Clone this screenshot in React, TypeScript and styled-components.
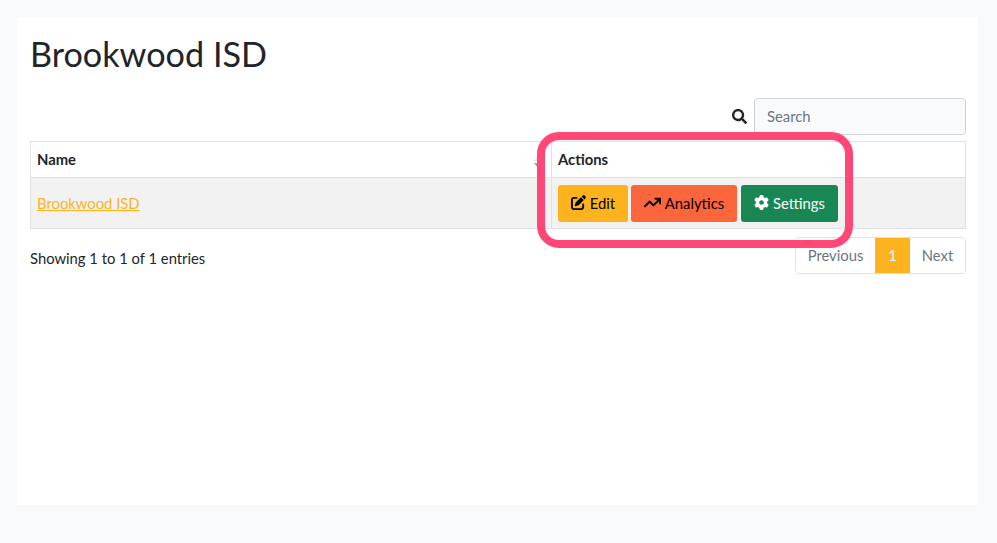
import React from "react";
import styled, { createGlobalStyle } from "styled-components";
import { FaSearch } from "react-icons/fa";
import { FaArrowTrendUp, FaGear, FaPenToSquare } from "react-icons/fa6";

const Global = createGlobalStyle`
  html, body { margin: 0; padding: 0; background: #f8f9fb; }
  body { font-family: Lato, "Open Sans", "Liberation Sans", sans-serif; color: #212529; font-size: 14.8px; }
  * { box-sizing: border-box; }
`;

const Page = styled.div`
  width: 997px;
  height: 543px;
  padding: 17px 19px 38px 17px;
`;

const Card = styled.main`
  position: relative;
  height: 488px;
  background: #fff;
  padding: 17px 12px 0 13px;
`;

const Title = styled.h1`
  margin: 0;
  height: 64px;
  padding-top: 0;
  font-size: 34.2px;
  line-height: 39px;
  font-weight: 400;
`;

const SearchBar = styled.div`
  display: flex;
  justify-content: flex-end;
  align-items: center;
  gap: 7px;
  height: 37px;
  margin-bottom: 6px;
`;

const SearchInput = styled.input`
  width: 212px;
  height: 37px;
  padding: 0 12px 2px;
  border: 1px solid #ced4da;
  border-radius: 4px;
  background: #f8fafc;
  font: inherit;
  &::placeholder { color: #6c757d; opacity: 1; }
`;

const Table = styled.table`
  width: 936px;
  border-collapse: collapse;
  table-layout: fixed;
`;

const NameCol = styled.col`
  width: 521px;
`;

const HeadCell = styled.th`
  position: relative;
  height: 36px;
  padding: 0 6px 2px;
  border: 1px solid #dee2e6;
  text-align: left;
  font-weight: 700;
  font-size: 14.8px;
`;

const SortMark = styled.span`
  position: absolute;
  right: 9px;
  bottom: 9px;
  width: 0;
  height: 0;
  border-left: 4px solid transparent;
  border-right: 4px solid transparent;
  border-top: 5px solid #9a9da0;
  &::before {
    content: "";
    position: absolute;
    left: -4px;
    top: -12px;
    border-left: 4px solid transparent;
    border-right: 4px solid transparent;
    border-bottom: 5px solid #e4e5e6;
  }
`;

const Row = styled.tr`
  background: #f2f2f2;
`;

const Cell = styled.td`
  height: 51px;
  padding: 0 6px;
  border: 1px solid #dee2e6;
`;

const NameLink = styled.a`
  display: block;
  padding-bottom: 1px;
  color: #fdb31d;
  text-decoration: underline;
`;

const Actions = styled.div`
  display: flex;
  gap: 3px;
`;

const ActionButton = styled.button<{ $bg: string; $fg: string; $w: number }>`
  display: inline-flex;
  align-items: center;
  justify-content: center;
  gap: 4px;
  width: ${(p) => p.$w}px;
  height: 37px;
  padding: 0 0 1px;
  border: 0;
  border-radius: 3px;
  background: ${(p) => p.$bg};
  color: ${(p) => p.$fg};
  font: inherit;
  &:last-child { margin-left: 1px; }
`;

const Footer = styled.div`
  display: flex;
  justify-content: space-between;
  margin-top: 8px;
`;

const Info = styled.div`
  padding-top: 12px;
  line-height: 18px;
`;

const Pager = styled.nav`
  display: flex;
  height: 37px;
  border: 1px solid #dee2e6;
  border-radius: 4px;
  overflow: hidden;
`;

const PageItem = styled.span<{ $w: number; $active?: boolean }>`
  display: flex;
  align-items: center;
  justify-content: center;
  width: ${(p) => p.$w}px;
  padding-bottom: 2px;
  margin: ${(p) => (p.$active ? "-1px 0" : "0")};
  background: ${(p) => (p.$active ? "#fdb31d" : "#fff")};
  color: ${(p) => (p.$active ? "#fff" : "#6c757d")};
`;

const Highlight = styled.div`
  position: absolute;
  left: 520px;
  top: 115px;
  width: 316px;
  height: 116px;
  border: 8px solid #ff4778;
  border-radius: 22px;
  pointer-events: none;
`;

export default function App() {
  return (
    <Page>
      <Global />
      <Card>
        <Title>Brookwood ISD</Title>
        <SearchBar>
          <FaSearch size={15} color="#212529" />
          <SearchInput placeholder="Search" />
        </SearchBar>
        <Table>
          <colgroup>
            <NameCol />
            <col />
          </colgroup>
          <thead>
            <tr>
              <HeadCell>
                Name
                <SortMark />
              </HeadCell>
              <HeadCell>Actions</HeadCell>
            </tr>
          </thead>
          <tbody>
            <Row>
              <Cell>
                <NameLink href="#">Brookwood ISD</NameLink>
              </Cell>
              <Cell>
                <Actions>
                  <ActionButton $bg="#fdb31d" $fg="#000" $w={70}>
                    <FaPenToSquare size={15} />
                    Edit
                  </ActionButton>
                  <ActionButton $bg="#fb663c" $fg="#000" $w={106}>
                    <FaArrowTrendUp size={17} />
                    Analytics
                  </ActionButton>
                  <ActionButton $bg="#198754" $fg="#fff" $w={97}>
                    <FaGear size={15} />
                    Settings
                  </ActionButton>
                </Actions>
              </Cell>
            </Row>
          </tbody>
        </Table>
        <Footer>
          <Info>Showing 1 to 1 of 1 entries</Info>
          <Pager>
            <PageItem $w={79}>Previous</PageItem>
            <PageItem $w={35} $active>
              1
            </PageItem>
            <PageItem $w={55}>Next</PageItem>
          </Pager>
        </Footer>
        <Highlight />
      </Card>
    </Page>
  );
}
